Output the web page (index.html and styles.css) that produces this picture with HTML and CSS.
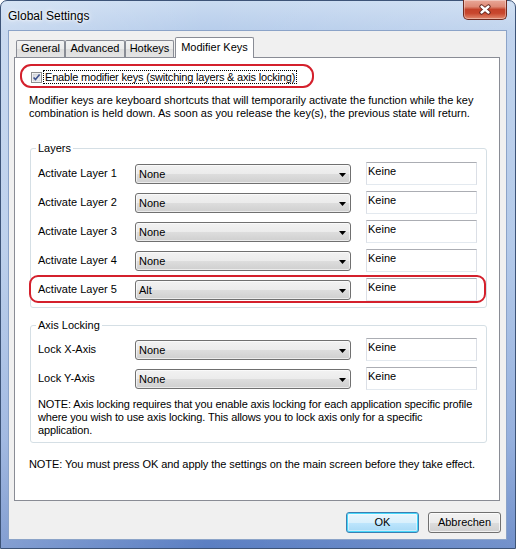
FILE: index.html
```html
<!DOCTYPE HTML>
<html lang="en">
<head>
  <meta charset="UTF-8">
  <title>Global Settings</title>
  <link rel="stylesheet" href="styles.css">
</head>
<body>

  <div class="window">

    <div class="titlebar">
      <span class="title">Global Settings</span>
      <div class="close">
        <svg width="14" height="11" viewBox="0 0 14 11">
          <path d="M3.5 2.5 L10.5 8.5 M10.5 2.5 L3.5 8.5" stroke="#5a1f17" stroke-width="4.2" stroke-linecap="round" fill="none"/>
          <path d="M3.5 2.5 L10.5 8.5 M10.5 2.5 L3.5 8.5" stroke="#fff" stroke-width="2.4" stroke-linecap="round" fill="none"/>
        </svg>
      </div>
    </div>

    <div class="client">

      <div class="tabs">
        <div class="tab tab-general">General</div>
        <div class="tab tab-advanced">Advanced</div>
        <div class="tab tab-hotkeys">Hotkeys</div>
        <div class="tab tab-active">Modifier Keys</div>
      </div>

      <div class="panel">

        <div class="enable">
          <svg class="check" width="11" height="11" viewBox="0 0 11 11">
            <defs>
              <linearGradient id="box-fill" x1="0" y1="0" x2="1" y2="1">
                <stop offset="0" stop-color="#d6d8dc"/>
                <stop offset="1" stop-color="#f6f6f6"/>
              </linearGradient>
            </defs>
            <rect x="0.5" y="0.5" width="10" height="10" fill="#fff" stroke="#8e8f8f"/>
            <rect x="2" y="2" width="7" height="7" fill="url(#box-fill)" stroke="#c3c6cc" stroke-width="0.6"/>
            <path d="M2.6 5.4 L4.5 7.6 L8.6 2.4" stroke="#3f5490" stroke-width="1.6" fill="none"/>
          </svg>
          <span class="focus">Enable modifier keys (switching layers &amp; axis locking)</span>
        </div>

        <p class="desc">Modifier keys are keyboard shortcuts that will temporarily activate the function while the key<br>combination is held down. As soon as you release the key(s), the previous state will return.</p>

        <fieldset class="group group-layers">
          <legend>Layers</legend>
          <div class="row">
            <span class="row-label">Activate Layer 1</span>
            <div class="combo"><span>None</span><svg width="7" height="4" viewBox="0 0 7 4"><path d="M0 0 H7 L3.5 4 Z" fill="#000"/></svg></div>
            <div class="keybox">Keine</div>
          </div>
          <div class="row">
            <span class="row-label">Activate Layer 2</span>
            <div class="combo"><span>None</span><svg width="7" height="4" viewBox="0 0 7 4"><path d="M0 0 H7 L3.5 4 Z" fill="#000"/></svg></div>
            <div class="keybox">Keine</div>
          </div>
          <div class="row">
            <span class="row-label">Activate Layer 3</span>
            <div class="combo"><span>None</span><svg width="7" height="4" viewBox="0 0 7 4"><path d="M0 0 H7 L3.5 4 Z" fill="#000"/></svg></div>
            <div class="keybox">Keine</div>
          </div>
          <div class="row">
            <span class="row-label">Activate Layer 4</span>
            <div class="combo"><span>None</span><svg width="7" height="4" viewBox="0 0 7 4"><path d="M0 0 H7 L3.5 4 Z" fill="#000"/></svg></div>
            <div class="keybox">Keine</div>
          </div>
          <div class="row row-marked">
            <span class="row-label">Activate Layer 5</span>
            <div class="combo"><span>Alt</span><svg width="7" height="4" viewBox="0 0 7 4"><path d="M0 0 H7 L3.5 4 Z" fill="#000"/></svg></div>
            <div class="keybox">Keine</div>
          </div>
        </fieldset>

        <fieldset class="group group-axis">
          <legend>Axis Locking</legend>
          <div class="row">
            <span class="row-label">Lock X-Axis</span>
            <div class="combo"><span>None</span><svg width="7" height="4" viewBox="0 0 7 4"><path d="M0 0 H7 L3.5 4 Z" fill="#000"/></svg></div>
            <div class="keybox">Keine</div>
          </div>
          <div class="row">
            <span class="row-label">Lock Y-Axis</span>
            <div class="combo"><span>None</span><svg width="7" height="4" viewBox="0 0 7 4"><path d="M0 0 H7 L3.5 4 Z" fill="#000"/></svg></div>
            <div class="keybox">Keine</div>
          </div>
          <p class="axis-note">NOTE: Axis locking requires that you enable axis locking for each application specific profile<br>where you wish to use axis locking. This allows you to lock axis only for a specific<br>application.</p>
        </fieldset>

        <p class="final-note">NOTE: You must press OK and apply the settings on the main screen before they take effect.</p>

      </div>

      <div class="buttons">
        <div class="btn btn-default">OK</div>
        <div class="btn">Abbrechen</div>
      </div>

    </div>
  </div>

</body>
</html>
```

FILE: styles.css
```css
html, body { margin: 0; background: #fff; }

body {
  font: 11px/13px "Liberation Sans", Arial, sans-serif;
  color: #000;
}

/* aero frame */
.window {
  width: 516px;
  height: 549px;
  box-sizing: border-box;
  display: flex;
  flex-direction: column;
  padding: 0 8px 8px 7px;
  border: 1px solid #3d5478;
  border-radius: 7px 7px 0 0;
  background:
    linear-gradient(90deg, rgba(255,255,255,0.25) 0, rgba(255,255,255,0) 40%, rgba(255,255,255,0.15) 100%),
    linear-gradient(180deg, #c9dbf1 0, #b7cdeb 30px, #a7c1e6 45%, #84a3d8 80%, #5a7ec2 100%);
}

.titlebar {
  height: 29px;
  display: flex;
  justify-content: space-between;
  align-items: center;
}

.title {
  font-size: 12px;
  line-height: 15px;
  padding-top: 1px;
  text-shadow: 0 0 6px #fff, 0 0 3px #fff;
}

.close {
  align-self: flex-start;
  margin-top: -1px;
  width: 44px;
  height: 20px;
  box-sizing: border-box;
  border: 1px solid #6e2a20;
  border-top: 0;
  border-radius: 0 0 5px 5px;
  display: flex;
  justify-content: center;
  align-items: center;
  background: linear-gradient(180deg, #e9a898 0, #de8a76 35%, #c4422a 50%, #c8472e 70%, #e28a6f 100%);
  box-shadow: inset 0 0 0 1px rgba(255,255,255,0.35);
}

/* dialog body */
.client {
  flex: 1;
  display: flex;
  flex-direction: column;
  padding: 6px 5px 0 5px;
  background: #f0f0f0;
  border: 1px solid #8ba3c8;
}

.tabs {
  display: flex;
  align-items: flex-end;
  height: 21px;
  margin-bottom: -1px;
  padding-left: 2px;
  position: relative;
  z-index: 1;
}

.tab {
  height: 17px;
  box-sizing: border-box;
  margin-bottom: 1px;
  border: 1px solid #898c95;
  border-bottom: 0;
  border-radius: 2px 2px 0 0;
  background: linear-gradient(180deg, #f3f3f3 0, #ebebeb 50%, #dedede 51%, #e4e4e4 100%);
  text-align: center;
  line-height: 15px;
}

.tab-general { width: 49px; }
.tab-advanced { width: 60px; }
.tab-hotkeys { width: 49px; }

.tab-active {
  width: 79px;
  height: 21px;
  margin-left: 1px;
  margin-bottom: 0;
  background: #fff;
  line-height: 19px;
}

.panel {
  flex: 1;
  margin-right: 1px;
  padding-top: 12px;
  background: #fff;
  border: 1px solid #898c95;
}

.enable {
  display: flex;
  align-items: center;
  height: 14px;
  margin-left: 16px;
  width: max-content;
  position: relative;
}

/* red marker drawn over the option */
.enable::after {
  content: "";
  position: absolute;
  top: -6px;
  bottom: -4px;
  left: -11px;
  right: -17px;
  border: 2px solid #d4202c;
  border-radius: 11px;
}

.check { display: block; }

.focus {
  margin-left: 1px;
  padding: 0 1px;
  height: 14px;
  box-sizing: border-box;
  border: 1px dotted #000;
  line-height: 12px;
  letter-spacing: -0.19px;
  white-space: nowrap;
}

.desc {
  margin: 10px 0 0 14px;
  white-space: nowrap;
}

.group {
  margin: 21px 12px 0 15px;
  padding: 3px 7px 3px 7px;
  border: 1px solid #d5dfe5;
  border-radius: 3px;
  min-width: 0;
}

.group legend {
  padding: 0 2px;
  margin-left: -2px;
  line-height: 15px;
}

.group-axis {
  margin-top: 10px;
  padding: 2px 7px 5px 7px;
}

.row {
  display: flex;
  align-items: center;
  height: 29px;
  position: relative;
}

.row-marked::after {
  content: "";
  position: absolute;
  top: 0;
  bottom: 1px;
  left: -9px;
  right: -7px;
  border: 2px solid #d4202c;
  border-radius: 9px;
}

.row-label {
  width: 97px;
  flex: none;
}

.combo {
  width: 216px;
  height: 20px;
  box-sizing: border-box;
  margin-right: 15px;
  padding: 1px 4px 0 3px;
  display: flex;
  justify-content: space-between;
  align-items: center;
  border: 1px solid #707070;
  border-radius: 3px;
  background: linear-gradient(180deg, #f2f2f2 0, #ebebeb 50%, #dddddd 51%, #cfcfcf 100%);
  box-shadow: inset 0 0 0 1px rgba(255,255,255,0.6);
}

.combo svg { display: block; margin-top: 1px; }

.keybox {
  width: 111px;
  height: 23px;
  box-sizing: border-box;
  padding: 2px 2px 0 1px;
  border: 1px solid #dbdfe6;
  border-top-color: #abadb3;
  border-bottom-color: #e3e9ef;
  background: #fff;
}

.axis-note {
  margin: 5px 0 0 0;
  letter-spacing: -0.13px;
  white-space: nowrap;
}

.final-note {
  margin: 15px 0 0 14px;
  letter-spacing: -0.07px;
  white-space: nowrap;
}

.buttons {
  height: 38px;
  box-sizing: border-box;
  padding-top: 11px;
  display: flex;
  justify-content: flex-end;
  align-items: flex-start;
  gap: 9px;
}

.btn {
  width: 73px;
  height: 21px;
  box-sizing: border-box;
  border: 1px solid #707070;
  border-radius: 3px;
  background: linear-gradient(180deg, #f2f2f2 0, #ebebeb 50%, #dddddd 51%, #cfcfcf 100%);
  box-shadow: inset 0 0 0 1px rgba(255,255,255,0.7);
  text-align: center;
  line-height: 19px;
}

.btn-default {
  border-color: #3c7fb1;
  box-shadow: inset 0 0 0 1px #48d8fb, inset 0 0 0 2px rgba(255,255,255,0.4);
  background: linear-gradient(180deg, #eaf6fd 0, #d9f0fc 50%, #bee6fd 51%, #a7d9f5 100%);
}
```
